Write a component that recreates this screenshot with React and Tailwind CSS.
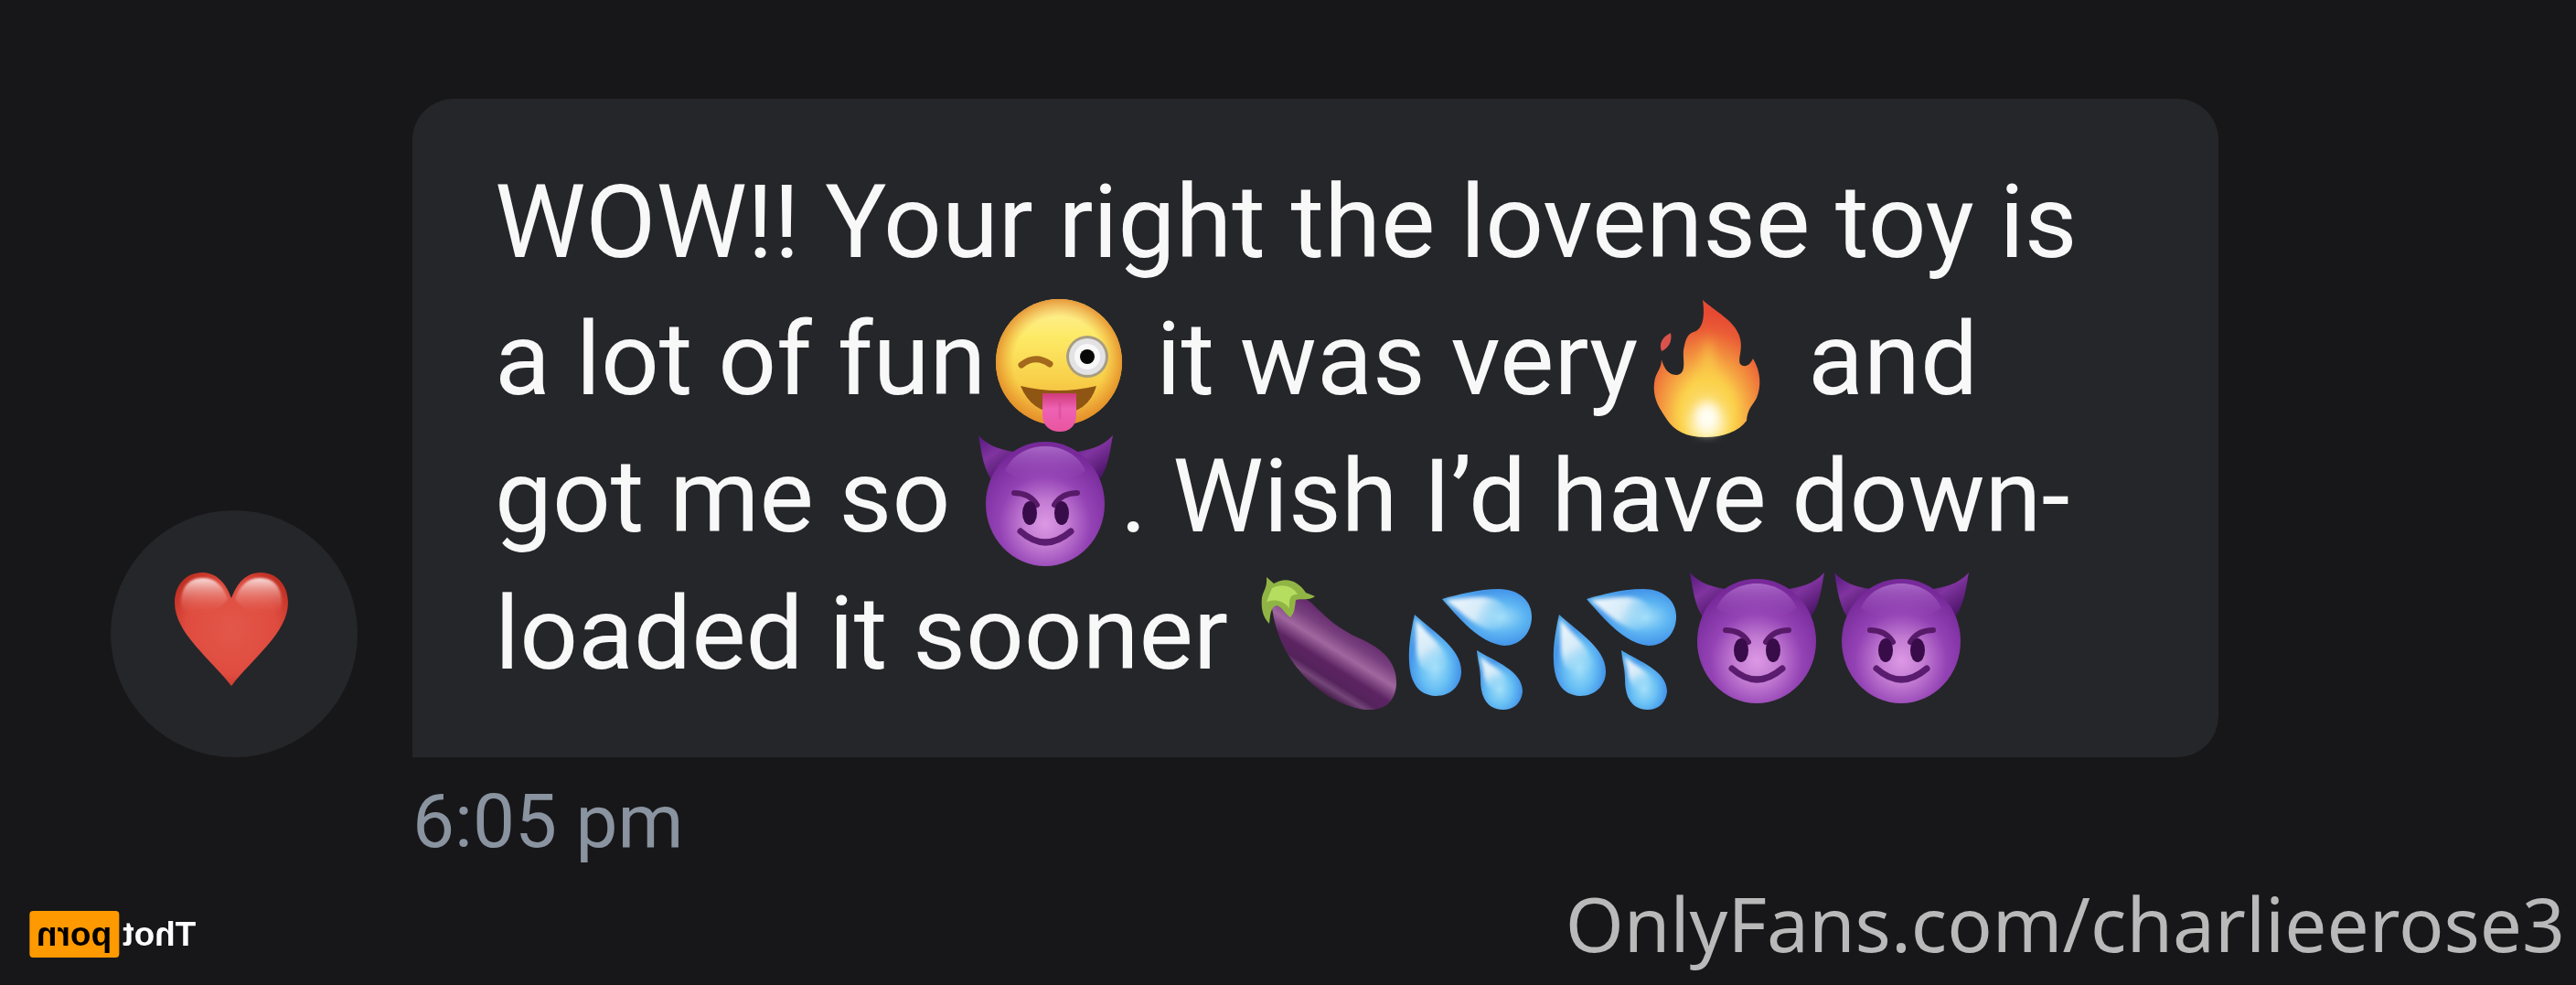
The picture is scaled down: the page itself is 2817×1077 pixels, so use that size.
import React from 'react';

const emojiClass = "inline-block w-[158px] h-[150px] -my-5 align-[-24px] overflow-visible";

const WinkTongue = () => (
  <svg viewBox="0 0 158 150" role="img" aria-label="Winking face with tongue" className={emojiClass}>
    <defs>
      <linearGradient id="wink-face" x1="0" y1="0" x2="0" y2="1">
        <stop offset="0" stopColor="#fdf0a0" />
        <stop offset="0.3" stopColor="#fdea66" />
        <stop offset="0.65" stopColor="#f8cf48" />
        <stop offset="1" stopColor="#eda537" />
      </linearGradient>
      <radialGradient id="wink-rim">
        <stop offset="0.72" stopColor="#e8932b" stopOpacity="0" />
        <stop offset="1" stopColor="#e38b27" stopOpacity="0.85" />
      </radialGradient>
      <linearGradient id="wink-tongue" x1="0" y1="0" x2="0" y2="1">
        <stop offset="0" stopColor="#cf3a78" />
        <stop offset="0.4" stopColor="#ee62b4" />
        <stop offset="1" stopColor="#e8559f" />
      </linearGradient>
    </defs>
    <circle cx="80" cy="71" r="69" fill="url(#wink-face)" />
    <circle cx="80" cy="71" r="69" fill="url(#wink-rim)" />
    <circle cx="111" cy="65" r="23" fill="#a79d83" />
    <circle cx="111" cy="65" r="20" fill="#e3e2e5" />
    <circle cx="111" cy="65" r="14" fill="#f8f8f8" />
    <circle cx="111" cy="65" r="8" fill="#080808" />
    <path d="M39 74Q54 62 70 73" fill="none" stroke="#a3691c" strokeWidth="7" strokeLinecap="round" />
    <path d="M38 97Q79 107 121 97Q112 127 80 127Q50 126 38 97Z" fill="#8f5512" />
    <path d="M62 105H99V129C99 141 91 147 81 147C71 147 62 141 62 129Z" fill="url(#wink-tongue)" />
    <path d="M81 116V132" stroke="#cf438d" strokeWidth="3" strokeLinecap="round" opacity="0.4" />
  </svg>
);

const Fire = () => (
  <svg viewBox="0 0 158 150" role="img" aria-label="Fire" className={emojiClass}>
    <defs>
      <radialGradient id="fire-body" gradientUnits="userSpaceOnUse" cx="76" cy="130" r="112" gradientTransform="translate(18 0) scale(0.76 1)">
        <stop offset="0" stopColor="#fffdf0" />
        <stop offset="0.15" stopColor="#fef3b0" />
        <stop offset="0.35" stopColor="#fbd24c" />
        <stop offset="0.6" stopColor="#f3953f" />
        <stop offset="0.85" stopColor="#ea5b36" />
        <stop offset="1" stopColor="#e64a32" />
      </radialGradient>
      <filter id="fire-soft" x="-30%" y="-30%" width="160%" height="160%">
        <feGaussianBlur stdDeviation="6" />
      </filter>
    </defs>
    <path d="M71 3C84 15 105 25 111 42C116 57 109 66 112 73C117 78 123 74 126 67C135 82 135 98 130 110C125 119 120 122 119 135C110 147 93 153 74 153C53 153 40 146 32 134C26 124 16 113 18 94C19 82 26 79 26 68C29 79 34 85 43 85C54 83 49 69 50 58C52 47 54 40 61 38C73 35 73 17 71 3Z" fill="url(#fire-body)" />
    <path d="M77 42C86 68 82 84 101 101C110 121 100 141 76 145C50 142 42 121 52 106C66 91 70 69 77 42Z" fill="#fbd04a" opacity="0.65" filter="url(#fire-soft)" />
    <ellipse cx="76" cy="132" rx="15" ry="17" fill="#fffef4" filter="url(#fire-soft)" />
    <path d="M36 39C26 44 23 51 26 59C33 56 38 49 36 39Z" fill="#d9534c" />
  </svg>
);

const Devil = () => (
  <svg viewBox="0 0 158 150" role="img" aria-label="Smiling face with horns" className={emojiClass}>
    <defs>
      <radialGradient id="devil-face" cx="0.5" cy="0.66" r="0.62">
        <stop offset="0" stopColor="#dc98e4" />
        <stop offset="0.3" stopColor="#c27bd2" />
        <stop offset="0.62" stopColor="#9443b5" />
        <stop offset="1" stopColor="#77299a" />
      </radialGradient>
      <linearGradient id="devil-shine" x1="0" y1="0" x2="0" y2="1">
        <stop offset="0" stopColor="#b577d0" stopOpacity="0.8" />
        <stop offset="1" stopColor="#9c4cbd" stopOpacity="0" />
      </linearGradient>
      <linearGradient id="devil-horn" x1="0" y1="0" x2="0.6" y2="1">
        <stop offset="0" stopColor="#55187c" />
        <stop offset="0.45" stopColor="#80349f" />
        <stop offset="1" stopColor="#481264" />
      </linearGradient>
    </defs>
    <path d="M3 1C15 14 29 17 46 20L20 53C8 40 6 17 3 1Z" fill="url(#devil-horn)" />
    <path d="M150 1C138 14 124 17 106 20L132 53C145 40 147 17 150 1Z" fill="url(#devil-horn)" />
    <ellipse cx="76" cy="76" rx="65" ry="68" fill="url(#devil-face)" />
    <path d="M32 40C47 4 105 4 120 40C98 56 54 56 32 40Z" fill="url(#devil-shine)" />
    <path d="M42 64Q59 64 67 77M111 64Q94 64 86 77" fill="none" stroke="#571a68" strokeWidth="6" strokeLinecap="round" />
    <ellipse cx="59" cy="86" rx="8" ry="13" fill="#380b49" />
    <ellipse cx="94" cy="86" rx="8" ry="13" fill="#380b49" />
    <path d="M49 106Q76 130 104 106" fill="none" stroke="#5a1c6e" strokeWidth="7" strokeLinecap="round" />
  </svg>
);

const Eggplant = () => (
  <svg viewBox="0 0 158 150" role="img" aria-label="Eggplant" className={emojiClass}>
    <defs>
      <linearGradient id="eggplant-body" gradientUnits="userSpaceOnUse" x1="108" y1="62" x2="68" y2="126">
        <stop offset="0" stopColor="#63296b" />
        <stop offset="0.2" stopColor="#79407f" />
        <stop offset="0.4" stopColor="#a0679f" />
        <stop offset="0.62" stopColor="#5c2462" />
        <stop offset="0.8" stopColor="#55235c" />
        <stop offset="0.9" stopColor="#744679" />
        <stop offset="1" stopColor="#4d2351" />
      </linearGradient>
    </defs>
    <path d="M20 40C30 26 50 22 63 34C80 51 93 63 116 73C140 84 157 98 156 124C154 144 142 152 122 151C97 148 72 133 54 113C35 92 24 68 20 40Z" fill="url(#eggplant-body)" />
    <path d="M14 6L22 13C35 5 49 10 57 23L67 27C61 32 52 29 46 31C45 38 45 45 40 50C34 46 31 38 25 37C18 39 18 49 17 57C9 49 8 38 9 28C11 20 15 17 14 6Z" fill="#90b544" />
    <path d="M20 18C32 12 44 17 48 25C38 24 39 34 39 40C32 31 22 30 14 33Z" fill="#b5dd5f" />
  </svg>
);

const Droplets = () => (
  <svg viewBox="0 0 158 150" role="img" aria-label="Sweat droplets" className={emojiClass}>
    <defs>
      <radialGradient id="drop-body" cx="0.5" cy="0.65" r="0.6">
        <stop offset="0" stopColor="#a5e0f9" />
        <stop offset="0.45" stopColor="#68c0f4" />
        <stop offset="0.8" stopColor="#4596ea" />
        <stop offset="1" stopColor="#4ba3e8" />
      </radialGradient>
      <radialGradient id="drop-side" cx="0.65" cy="0.5" r="0.6">
        <stop offset="0" stopColor="#a5e0f9" />
        <stop offset="0.45" stopColor="#5db5f2" />
        <stop offset="0.8" stopColor="#4596ea" />
        <stop offset="1" stopColor="#4ba3e8" />
      </radialGradient>
      <linearGradient id="drop-shine" x1="0" y1="0" x2="0.4" y2="1">
        <stop offset="0" stopColor="#f4f9fc" />
        <stop offset="0.6" stopColor="#d5ebf8" />
        <stop offset="1" stopColor="#9fdcf8" stopOpacity="0.3" />
      </linearGradient>
      <linearGradient id="drop-side-shine" x1="0" y1="0" x2="1" y2="0.3">
        <stop offset="0" stopColor="#f4f9fc" />
        <stop offset="0.6" stopColor="#d5ebf8" />
        <stop offset="1" stopColor="#9fdcf8" stopOpacity="0.3" />
      </linearGradient>
      <filter id="drop-soft" x="-20%" y="-20%" width="140%" height="140%">
        <feGaussianBlur stdDeviation="2" />
      </filter>
    </defs>
    <path d="M18 47C36 64 69 83 69 109C69 125 57 136 41 136C22 135 13 121 12 99C11 79 15 61 18 47Z" fill="url(#drop-body)" />
    <path d="M19 52C34 69 52 84 54 100C52 111 34 114 24 103C18 88 20 70 19 52Z" fill="url(#drop-shine)" filter="url(#drop-soft)" />
    <path d="M48 30C66 25 88 19 110 19C133 19 147 33 146 51C145 69 132 81 116 81C88 78 67 51 48 30Z" fill="url(#drop-side)" />
    <path d="M52 31C77 29 101 23 115 36C122 48 115 63 102 64C81 58 68 44 52 31Z" fill="url(#drop-side-shine)" filter="url(#drop-soft)" />
    <path d="M86 86C105 98 136 108 136 131C135 143 127 151 115 151C97 151 90 137 90 118C90 105 87 97 86 86Z" fill="url(#drop-body)" />
    <path d="M89 92C102 103 117 109 119 121C116 131 103 132 97 124C92 112 93 104 89 92Z" fill="url(#drop-shine)" filter="url(#drop-soft)" />
  </svg>
);

const Heart = () => (
  <svg viewBox="0 0 124 124" aria-hidden="true" className="w-[124px] h-[124px]">
    <defs>
      <radialGradient id="heart-body" cx="0.5" cy="0.5" r="0.62">
        <stop offset="0" stopColor="#e2574a" />
        <stop offset="0.65" stopColor="#df4c3f" />
        <stop offset="1" stopColor="#bd2c20" />
      </radialGradient>
      <linearGradient id="heart-shine" x1="0" y1="0" x2="0" y2="1">
        <stop offset="0" stopColor="#f8dcda" />
        <stop offset="0.35" stopColor="#ec9a93" stopOpacity="0.8" />
        <stop offset="1" stopColor="#e2574a" stopOpacity="0" />
      </linearGradient>
      <filter id="heart-soft" x="-20%" y="-20%" width="140%" height="140%">
        <feGaussianBlur stdDeviation="1" />
      </filter>
    </defs>
    <path d="M62 28C55 9 44 0 30 0C12 0 0 14 0 33C0 66 40 95 62 124C84 95 124 66 124 33C124 14 112 0 94 0C80 0 69 9 62 28Z" fill="url(#heart-body)" />
    <path d="M7 34C7 14 17 6 31 6C44 6 53 14 58 29C50 43 16 51 9 43Z" fill="url(#heart-shine)" filter="url(#heart-soft)" />
    <path d="M117 34C117 14 107 6 93 6C80 6 71 14 66 29C74 43 108 51 115 43Z" fill="url(#heart-shine)" filter="url(#heart-soft)" />
  </svg>
);

const App = () => {
  return (
    <div className="min-h-screen bg-[#171719] flex flex-col font-[Roboto,sans-serif]">
      <main className="grid grid-cols-[270px_minmax(0,1975px)] gap-x-[60px] pl-[121px] pr-10 pt-[108px]">
        <button type="button" aria-label="Like message" className="self-end w-[270px] h-[270px] pb-2.5 pr-1.5 rounded-full bg-[#252629] flex items-center justify-center">
          <Heart />
        </button>
        <p className="bg-[#252629] rounded-[45px] rounded-bl-none px-[90px] py-[60px] text-[112px] leading-[150px] text-[#f8f8f9]">
          WOW!! Your right the lovense toy is a lot of fun<WinkTongue /> it was very<Fire /> and got me so <Devil />. Wish I’d have down&shy;loaded it sooner{' '}
          <Eggplant />
          <Droplets />
          <Droplets />
          <Devil />
          <Devil />
        </p>
        <time className="col-start-2 mt-5 text-[82px] leading-[100px] text-[#8a93a0]">6:05 pm</time>
      </main>

      <footer className="mt-auto flex items-center justify-between pl-8 pr-3 pb-4">
        <div className="mt-6 flex items-center gap-1 -scale-x-100 font-['Liberation_Sans',sans-serif] font-bold text-[37px] leading-[51px]">
          <span className="text-white">Thot</span>
          <span className="bg-[#ff9900] text-black rounded px-2">porn</span>
        </div>
        <p className="font-['Noto_Sans',sans-serif] text-[82px] leading-[104px] text-[#b9b9b9]">OnlyFans.com/charlieerose3</p>
      </footer>
    </div>
  );
};

export default App;
